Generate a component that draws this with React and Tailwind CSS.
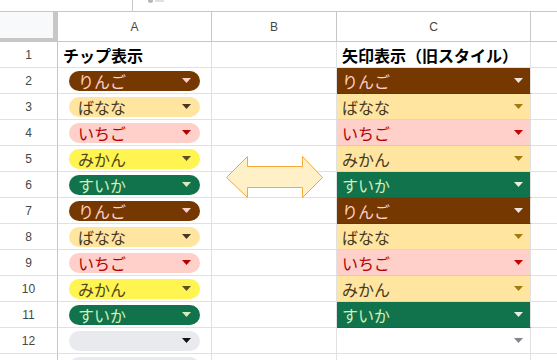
import React from 'react';

const FONT = "font-['Noto_Sans_CJK_JP','Noto_Sans',sans-serif]";

const styles = {
  ringo: {
    label: 'りんご',
    chip: 'bg-[#753800] text-[#ffcfc9]',
    chipArrow: 'fill-[#ffcfc9]',
    cell: 'bg-[#753800] text-[#ffcfc9] border-b-[#6a3300]',
    cellArrow: 'fill-[#f1e3df]',
  },
  banana: {
    label: 'ばなな',
    chip: 'bg-[#ffe5a0] text-[#473822]',
    chipArrow: 'fill-[#473822]',
    cell: 'bg-[#ffe5a0] text-[#473822] border-b-[#f3d692]',
    cellArrow: 'fill-[#a07b12]',
  },
  ichigo: {
    label: 'いちご',
    chip: 'bg-[#ffcfc9] text-[#b10202]',
    chipArrow: 'fill-[#b10202]',
    cell: 'bg-[#ffcfc9] text-[#b10202] border-b-[#eec0b6]',
    cellArrow: 'fill-[#c40000]',
  },
  mikan: {
    label: 'みかん',
    chip: 'bg-[#fff450] text-[#4d4420]',
    chipArrow: 'fill-[#5a5024]',
    cell: 'bg-[#ffe5a0] text-[#473822] border-b-[#f3d692]',
    cellArrow: 'fill-[#a07b12]',
  },
  suika: {
    label: 'すいか',
    chip: 'bg-[#11734b] text-[#d4edbc]',
    chipArrow: 'fill-[#d4edbc]',
    cell: 'bg-[#11734b] text-[#d4edbc] border-b-[#0f6a45]',
    cellArrow: 'fill-[#e6f2dd]',
  },
};

const order = ['ringo', 'banana', 'ichigo', 'mikan', 'suika', 'ringo', 'banana', 'ichigo', 'mikan', 'suika'];

const Caret = ({ className }) => (
  <svg width="9" height="5" viewBox="0 0 9 5" className={className}>
    <path d="M0 0 H9 L4.5 5 Z" />
  </svg>
);

const Chip = ({ item }) => (
  <div className={`mx-[11px] h-[20px] w-[131px] rounded-full flex items-center justify-between pl-[9px] pr-[9px] ${item ? item.chip : 'bg-[#e8eaed]'}`}>
    <span className="text-[16px] leading-none">{item ? item.label : ''}</span>
    <Caret className={item ? item.chipArrow : 'fill-[#111]'} />
  </div>
);

const Row = ({ num, a, c, cClass = '' }) => (
  <div className="flex h-[26px]">
    <div className="w-[58px] shrink-0 border-r border-b border-r-[#c4c7c5] border-b-[#e1e1e1] flex items-center justify-center text-[12px] text-[#444746] font-['Liberation_Sans',Arial,sans-serif]">
      {num}
    </div>
    <div className="w-[154px] shrink-0 border-r border-b border-[#e1e1e1] flex items-center">{a}</div>
    <div className="w-[125px] shrink-0 border-r border-b border-[#e1e1e1]" />
    <div className={`w-[194px] shrink-0 border-r border-b border-r-[#e1e1e1] flex items-center justify-between pl-[5px] pr-[7px] ${cClass || 'border-b-[#e1e1e1]'}`}>
      {c}
    </div>
    <div className="flex-1 border-b border-[#e1e1e1]" />
  </div>
);

export default function App() {
  return (
    <div className={`relative w-[557px] h-[360px] overflow-hidden bg-white ${FONT}`}>
      {/* toolbar remnant */}
      <div className="h-[12px] border-b border-[#c4c7c5] flex">
        <div className="w-[132px]" />
        <div className="w-px h-[12px] bg-[#c4c7c5]" />
        <div className="ml-[15px] flex items-start gap-[2px]">
          <div className="w-[5px] h-[3px] rounded-b-full bg-[#b8b8b8]" />
          <div className="w-[9px] h-[2px] bg-[#e0e0e0]" />
        </div>
      </div>

      {/* column header */}
      <div className="flex h-[30px] text-[12px] text-[#444746] font-['Liberation_Sans',Arial,sans-serif]">
        <div className="w-[58px] shrink-0 border-r border-[#c4c7c5]">
          <div className="h-full bg-[#f8f9fa] border-r-[4px] border-b-[4px] border-[#c7c7c7]" />
        </div>
        <div className="w-[154px] shrink-0 border-r border-b border-[#c4c7c5] flex items-center justify-center">A</div>
        <div className="w-[125px] shrink-0 border-r border-b border-[#c4c7c5] flex items-center justify-center">B</div>
        <div className="w-[194px] shrink-0 border-r border-b border-[#c4c7c5] flex items-center justify-center">C</div>
        <div className="flex-1 border-b border-[#c4c7c5]" />
      </div>

      <Row
        num="1"
        a={<span className="pl-[5px] text-[16px] font-bold text-black">チップ表示</span>}
        c={<span className="text-[16px] font-bold text-black">矢印表示（旧スタイル）</span>}
      />

      {order.map((key, i) => {
        const item = styles[key];
        return (
          <Row
            key={i}
            num={String(i + 2)}
            a={<Chip item={item} />}
            cClass={item.cell}
            c={
              <>
                <span className="text-[16px] leading-none">{item.label}</span>
                <Caret className={item.cellArrow} />
              </>
            }
          />
        );
      })}

      <Row num="12" a={<Chip item={null} />} c={<><span /><Caret className="fill-[#80868b]" /></>} />
      {/* row 13 is cut off by the window edge, its number is not visible */}
      <Row num="" a={<Chip item={null} />} c={null} />

      {/* double arrow shape */}
      <svg className="absolute left-[226px] top-[156px]" width="97" height="42" viewBox="-0.5 -0.5 97 42">
        <path
          d="M0 21 L21 0 L21 10 L76 10 L76 0 L96 21 L76 41 L76 31 L21 31 L21 41 Z"
          fill="#fff0c8"
          stroke="#f6a935"
          strokeWidth="1"
          strokeLinejoin="miter"
        />
      </svg>
    </div>
  );
}
